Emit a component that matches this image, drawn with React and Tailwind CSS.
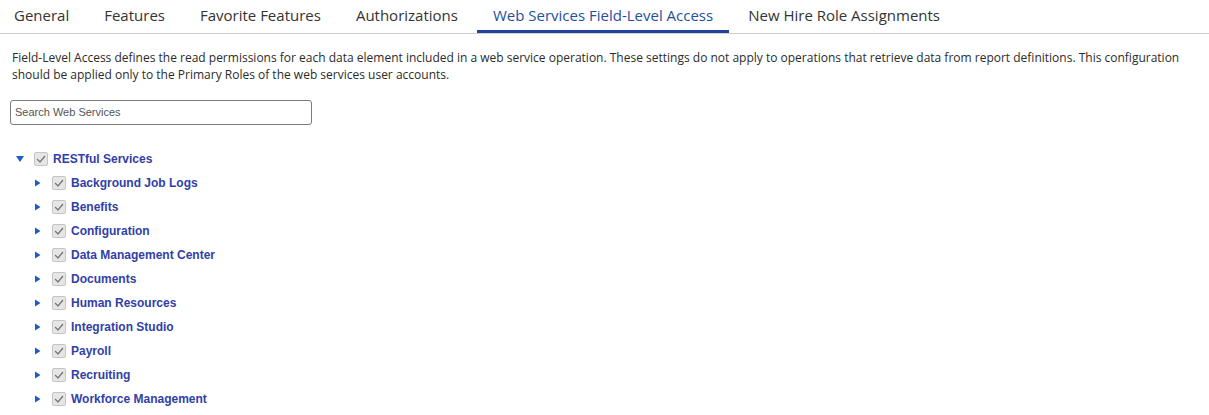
const tabs = [
  "General",
  "Features",
  "Favorite Features",
  "Authorizations",
  "Web Services Field-Level Access",
  "New Hire Role Assignments",
];

const services = [
  "Background Job Logs",
  "Benefits",
  "Configuration",
  "Data Management Center",
  "Documents",
  "Human Resources",
  "Integration Studio",
  "Payroll",
  "Recruiting",
  "Workforce Management",
];

function Caret({ open }) {
  return open ? (
    <svg width="8" height="8" viewBox="0 0 8 8" className="shrink-0">
      <path d="M0 1 L8 1 L4 7 Z" fill="#1d5cc9" />
    </svg>
  ) : (
    <svg width="7" height="8" viewBox="0 0 7 8" className="mr-[1px] shrink-0">
      <path d="M1 0.5 L6.5 4 L1 7.5 Z" fill="#1d5cc9" />
    </svg>
  );
}

function Check() {
  return (
    <span className="flex h-[14px] w-[14px] shrink-0 items-center justify-center rounded-[2px] border border-[#c4c4c4] bg-[#e6e6e6]">
      <svg width="10" height="8" viewBox="0 0 10 8">
        <path d="M1 4 L4 7 L9 1" fill="none" stroke="#7a7a7a" strokeWidth="1.4" />
      </svg>
    </span>
  );
}

function TreeRow({ label, open, indent }) {
  return (
    <div className={`flex h-6 items-center ${indent ? "pl-[34px]" : "pl-[16px]"}`}>
      <Caret open={open} />
      <span className="ml-[10px]">
        <Check />
      </span>
      <span className="ml-[5px] text-[12px] font-bold text-[#3140a8]">{label}</span>
    </div>
  );
}

export default function App() {
  return (
    <div className="min-h-[415px] bg-white" style={{ fontFamily: "'Open Sans', sans-serif" }}>
      {/* Tabs */}
      <div className="flex h-[34px] border-b border-[#cfcfcf]">
        <div className="-ml-[2px] flex gap-[3px]">
          {tabs.map((t) => {
            const active = t === "Web Services Field-Level Access";
            return (
              <div
                key={t}
                className={`flex items-center px-4 pb-[2px] text-[15px] ${
                  active
                    ? "border-b-[3px] border-[#21449a] pt-[3px] pb-0 text-[#1f4f9e]"
                    : "text-[#333333]"
                }`}
              >
                {t}
              </div>
            );
          })}
        </div>
      </div>

      {/* Description */}
      <p className="mt-[15px] px-[12px] text-[12px] leading-[17px] text-[#2b2b2b]">
        Field-Level Access defines the read permissions for each data element included in a web
        service operation. These settings do not apply to operations that retrieve data from
        report definitions. This configuration should be applied only to the Primary Roles of the
        web services user accounts.
      </p>

      {/* Search */}
      <div className="mt-[15px] px-[10px]">
        <input
          placeholder="Search Web Services"
          className="h-[25px] w-[302px] rounded-[3px] border border-[#7c7c7c] px-[4px] text-[11px] text-[#333] placeholder:text-[#555] outline-none"
          style={{ fontFamily: "'Liberation Sans', Arial, sans-serif" }}
        />
      </div>

      {/* Tree */}
      <div
        className="mt-[22px]"
        style={{ fontFamily: "'Liberation Sans', Arial, sans-serif" }}
      >
        <TreeRow label="RESTful Services" open />
        {services.map((s) => (
          <TreeRow key={s} label={s} indent />
        ))}
      </div>
    </div>
  );
}
